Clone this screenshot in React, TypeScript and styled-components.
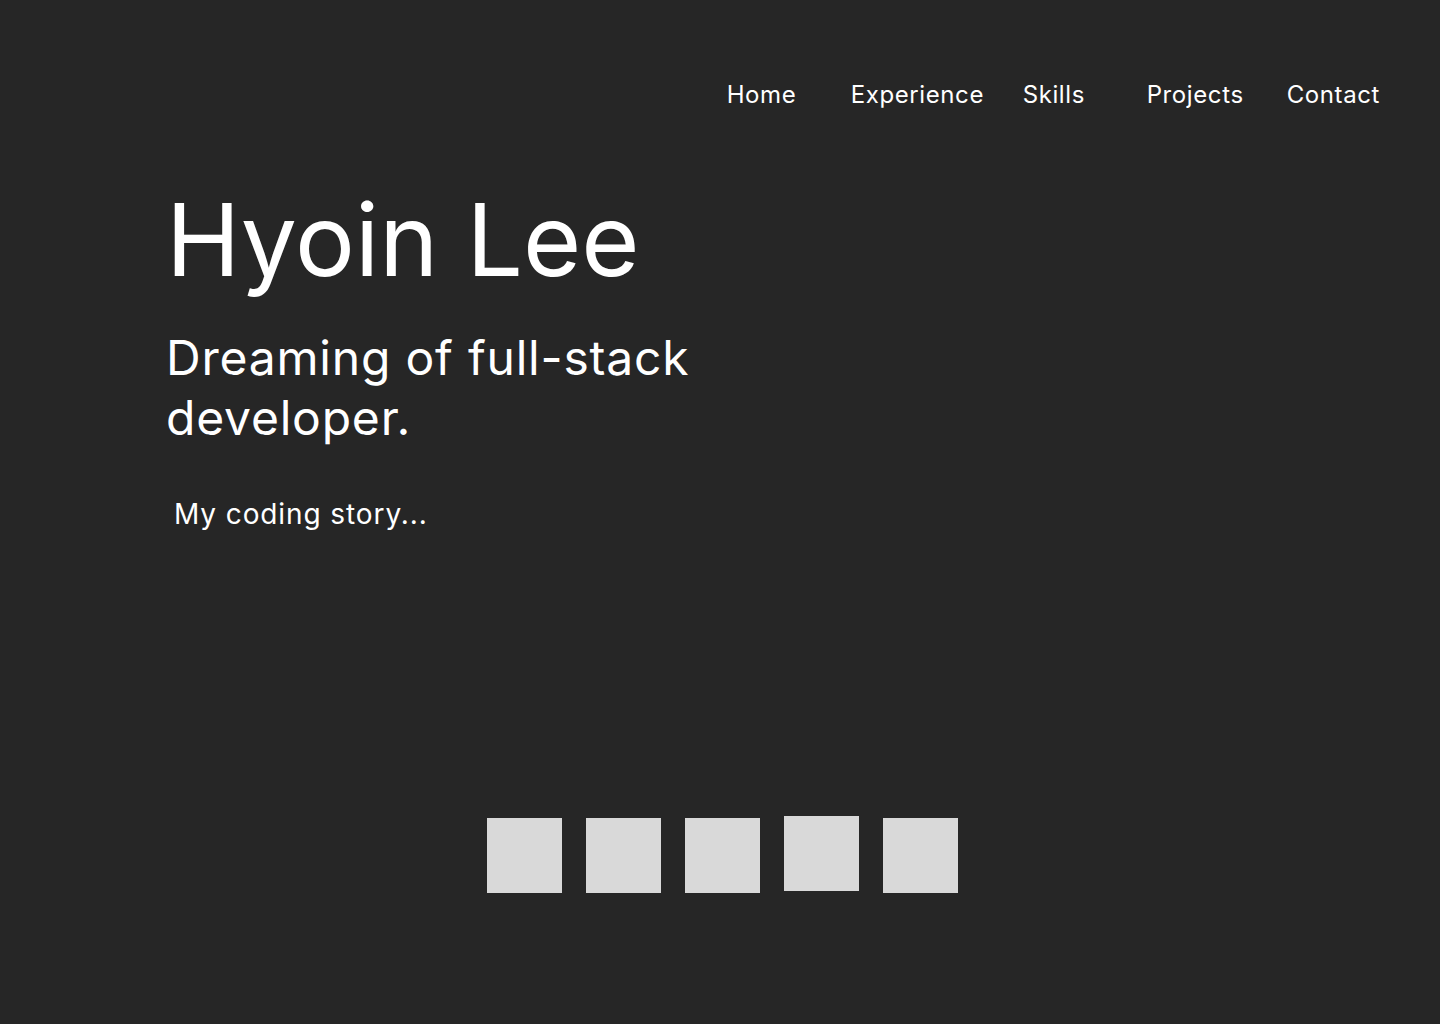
import React from "react";
import styled, { createGlobalStyle } from "styled-components";

const Global = createGlobalStyle`
  html, body { margin: 0; padding: 0; background: #262626; }
  body { font-family: Inter, "Noto Sans", sans-serif; color: #ffffff; }
  * { box-sizing: border-box; }
`;

const Page = styled.div`
  width: 1440px;
  height: 1024px;
  background: #262626;
  display: flex;
  flex-direction: column;
`;

const Nav = styled.nav`
  display: flex;
  justify-content: flex-end;
  padding: 80px 60px 0 0;
`;

const NavLink = styled.a<{ $w?: number }>`
  display: block;
  width: ${(p) => (p.$w ? `${p.$w}px` : "auto")};
  font-size: 24px;
  letter-spacing: 0.6px;
  line-height: 30px;
  color: #ffffff;
  text-decoration: none;
  white-space: nowrap;
`;

const Hero = styled.section`
  display: flex;
  flex-direction: column;
  padding: 70px 0 0 166px;
`;

const Title = styled.h1`
  margin: 0;
  font-size: 100px;
  font-weight: 400;
  line-height: 120px;
`;

const Subtitle = styled.h2`
  margin: 28px 0 0;
  width: 580px;
  font-size: 48px;
  font-weight: 400;
  letter-spacing: 0.8px;
  line-height: 60px;
`;

const Story = styled.p`
  margin: 49px 0 0 8px;
  font-size: 28px;
  letter-spacing: 0.9px;
  line-height: 34px;
`;

const Squares = styled.div`
  display: flex;
  gap: 24px;
  align-items: flex-start;
  padding-left: 487px;
  margin-top: 285px;
`;

const Square = styled.div<{ $raised?: boolean }>`
  width: 75px;
  height: 75px;
  background: #d9d9d9;
  margin-top: ${(p) => (p.$raised ? "0" : "2px")};
`;

export default function App() {
  return (
    <Page>
      <Global />
      <Nav>
        <NavLink $w={124}>Home</NavLink>
        <NavLink $w={172}>Experience</NavLink>
        <NavLink $w={124}>Skills</NavLink>
        <NavLink $w={140}>Projects</NavLink>
        <NavLink>Contact</NavLink>
      </Nav>
      <Hero>
        <Title>Hyoin Lee</Title>
        <Subtitle>Dreaming of full-stack developer.</Subtitle>
        <Story>My coding story...</Story>
      </Hero>
      <Squares>
        <Square />
        <Square />
        <Square />
        <Square $raised />
        <Square />
      </Squares>
    </Page>
  );
}
